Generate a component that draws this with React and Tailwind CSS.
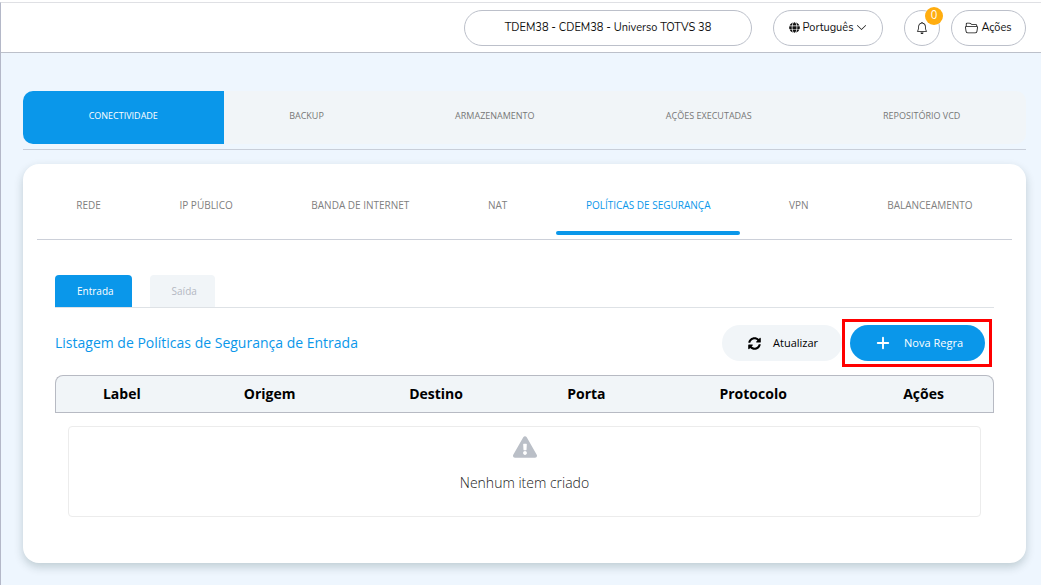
import { useState } from 'react';
import { BsBell, BsChevronDown, BsFolder2Open } from 'react-icons/bs';
import { FaExclamationTriangle, FaGlobe, FaSyncAlt } from 'react-icons/fa';
import { Plus } from 'lucide-react';

const SECTIONS = ['Conectividade', 'Backup', 'Armazenamento', 'Ações Executadas', 'Repositório VCD'];
const NETWORK_TABS = ['Rede', 'IP Público', 'Banda de Internet', 'NAT', 'Políticas de Segurança', 'VPN', 'Balanceamento'];
const COLUMNS = ['Label', 'Origem', 'Destino', 'Porta', 'Protocolo', 'Ações'];

const pill = 'flex h-9 items-center justify-center rounded-full border border-[#bcc0ca] bg-white cursor-pointer';

function TopBar() {
  return (
    <header className="flex h-[50px] items-center justify-end border-b border-[#bcc0ca] bg-white pr-[15px] font-['Nunito','Open_Sans',sans-serif] text-[11px] leading-4 text-[#111]">
      <button className={`${pill} w-72`}>TDEM38 - CDEM38 - Universo TOTVS 38</button>
      <button className={`${pill} ml-[21px] w-[110px] gap-[3px]`}>
        <FaGlobe size={11} />
        Português
        <BsChevronDown size={11} />
      </button>
      <button className={`${pill} relative ml-[21px] w-9`} aria-label="Notificações">
        <BsBell size={12} />
        <span className="absolute -top-1 -right-1 flex size-[18px] items-center justify-center rounded-full bg-[#ffad0f] text-white">0</span>
      </button>
      <button className={`${pill} ml-[11px] w-[75px] gap-[3px]`}>
        <BsFolder2Open size={13} />
        Ações
      </button>
    </header>
  );
}

function SectionTabs({ active, onSelect }) {
  return (
    <nav className="border-b border-[#c8ced9] pb-[5px]">
      <div className="flex h-[53px] overflow-hidden rounded-[10px] bg-[#f1f5f8]">
        {SECTIONS.map((name) => (
          <button
            key={name}
            onClick={() => onSelect(name)}
            className={`flex-auto cursor-pointer pb-1 text-[9px] uppercase ${active === name ? 'bg-[#0a97ea] text-white' : 'text-[#777]'}`}
          >
            {name}
          </button>
        ))}
      </div>
    </nav>
  );
}

function NetworkTabs({ active, onSelect }) {
  return (
    <nav className="flex justify-around border-b border-[#ccd0d9] pb-1">
      {NETWORK_TABS.map((name) => (
        <button key={name} onClick={() => onSelect(name)} className="flex cursor-pointer flex-col text-[10px] uppercase">
          <span className={`px-[30px] pt-[22px] pb-[18px] leading-[15px] ${active === name ? 'text-[#0a97ea]' : 'text-[#808080]'}`}>{name}</span>
          <span className={`h-1 w-full rounded-full ${active === name ? 'bg-[#0a97ea]' : ''}`} />
        </button>
      ))}
    </nav>
  );
}

function DirectionTabs({ active, onSelect }) {
  const tab = (name) =>
    `h-8 cursor-pointer rounded-t pr-[18px] pl-[22px] text-[10px] ${active === name ? 'bg-[#0a97ea] text-white' : 'bg-[#f1f5f8] text-[#b4b8c2]'}`;
  return (
    <div className="flex gap-[18px] border-b border-[#dee2e6]">
      <button className={tab('Entrada')} onClick={() => onSelect('Entrada')}>Entrada</button>
      <button className={tab('Saída')} onClick={() => onSelect('Saída')}>Saída</button>
    </div>
  );
}

function RulesTable() {
  return (
    <table className="w-full border-separate border-spacing-0 text-sm">
      <thead>
        <tr>
          {COLUMNS.map((col) => (
            <th
              key={col}
              className="h-[38px] border-y border-[#b7bac3] bg-[#f1f5f8] px-2 text-center font-bold text-black first:rounded-tl-lg first:border-l last:rounded-tr-lg last:border-r"
            >
              {col}
            </th>
          ))}
        </tr>
      </thead>
      <tbody>
        <tr>
          <td colSpan={COLUMNS.length} className="p-[13px]">
            <div className="flex h-[91px] flex-col items-center rounded border border-[#ececec] pt-2 font-light text-[#222]">
              <FaExclamationTriangle size={24} className="text-[#babfc7]" />
              <p className="mt-3.5 leading-5">Nenhum item criado</p>
            </div>
          </td>
        </tr>
      </tbody>
    </table>
  );
}

export default function App() {
  const [section, setSection] = useState('Conectividade');
  const [tab, setTab] = useState('Políticas de Segurança');
  const [direction, setDirection] = useState('Entrada');

  return (
    <div className="bg-white pt-0.5 font-['Open_Sans',sans-serif]">
      <div className="min-h-screen border-t border-l border-t-[#dfe0e4] border-l-[#b4b8c8] bg-[#eef6fe]">
        <TopBar />
        <main className="pt-[38px] pr-[15px] pb-[22px] pl-[22px]">
          <SectionTabs active={section} onSelect={setSection} />
          <section className="mt-3.5 rounded-2xl bg-white px-3.5 pt-3 pb-[33px] shadow-[0_4px_10px_rgba(0,40,40,0.2)]">
            <NetworkTabs active={tab} onSelect={setTab} />
            <div className="px-[18px] pt-[35px]">
              <DirectionTabs active={direction} onSelect={setDirection} />
              <div className="mt-[11px] mb-2 flex items-center">
                <h1 className="flex-1 text-sm text-[#0a97ea]">Listagem de Políticas de Segurança de {direction}</h1>
                <button className="flex h-9 cursor-pointer items-center gap-3 rounded-full bg-[#f1f5f8] pr-6 pl-[26px] text-[11px] leading-4 font-medium text-black">
                  <FaSyncAlt size={13} />
                  Atualizar
                </button>
                <div className="mr-0.5 border-3 border-[#ff0000] py-[3px] pr-1 pl-[5px]">
                  <button className="flex h-9 cursor-pointer items-center gap-3 rounded-full bg-[#0a97ea] pr-[22px] pl-6 text-[11px] leading-4 text-white">
                    <Plus size={18} strokeWidth={2.5} />
                    Nova Regra
                  </button>
                </div>
              </div>
              <RulesTable />
            </div>
          </section>
        </main>
      </div>
    </div>
  );
}
